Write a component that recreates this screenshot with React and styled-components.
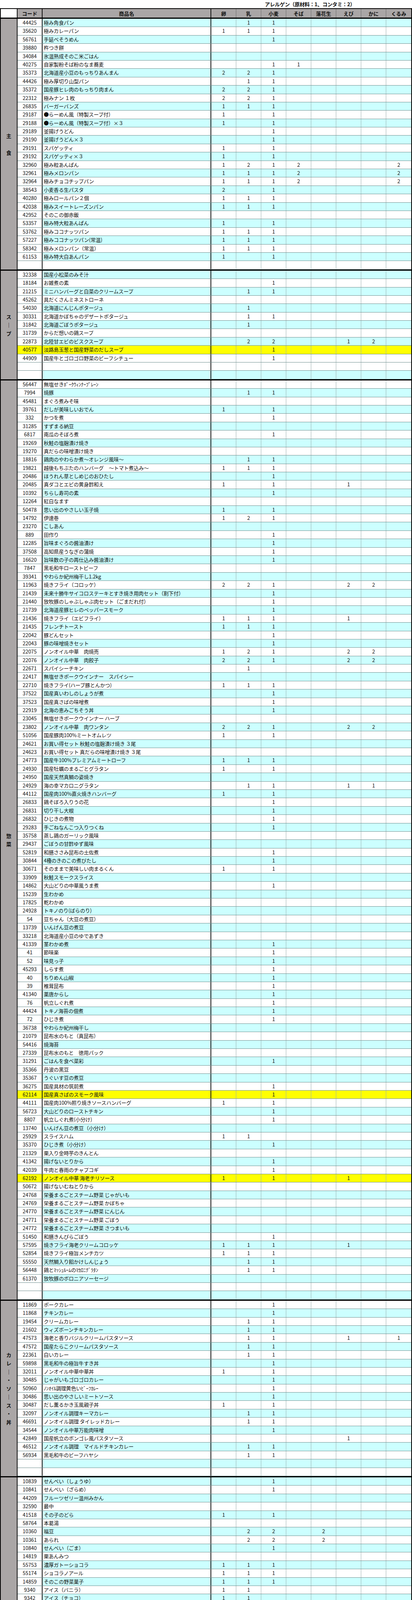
import React from "react";
import styled, { createGlobalStyle } from "styled-components";

const Global = createGlobalStyle`
  html, body { margin: 0; padding: 0; background: #fff; }
  body { font-family: "Noto Sans CJK JP", "Noto Sans", sans-serif; color: #111; }
`;

const COLS = "64px 432px repeat(8, 1fr)";

const Page = styled.div`
  width: 1055px;
`;
const Title = styled.div`
  height: 21px;
  display: flex;
  align-items: center;
  justify-content: flex-end;
  padding-right: 146px;
  font-size: 13px;
  font-weight: 700;
  letter-spacing: -0.3px;
`;
const Table = styled.div`
  width: 1051px;
  border: 2px solid #000;
`;
const HeaderRow = styled.div`
  display: grid;
  grid-template-columns: 43px ${COLS};
  height: 22px;
  background: #aaa6a6;
  border-bottom: 3px solid #000;
  font-size: 13px;
  font-weight: 700;
`;
const HCell = styled.div`
  display: flex;
  align-items: center;
  justify-content: center;
  background: ${(p) => (p.$blank ? "#fff" : "transparent")};
  border-right: ${(p) => (p.$thick ? "2px solid #111" : p.$last ? "none" : "1px solid #6d6d6d")};
`;
const Section = styled.div`
  display: grid;
  grid-template-columns: 43px 1fr;
  border-top: ${(p) => (p.$first ? "none" : "3px solid #000")};
`;
const Label = styled.div`
  background: #aaa6a6;
  border-right: 2px solid #111;
  display: flex;
  flex-direction: column;
  align-items: center;
  justify-content: center;
  font-size: 13px;
  font-weight: 700;
  overflow: hidden;
`;
const LabelChar = styled.div`
  height: 21.5px;
  line-height: 21.5px;
`;
const Rows = styled.div`
  display: flex;
  flex-direction: column;
`;
const Row = styled.div`
  display: grid;
  grid-template-columns: ${COLS};
  height: 21.4px;
  box-sizing: border-box;
  border-bottom: 1px solid #6f8f8f;
  background: ${(p) => (p.$bg === "y" ? "#ffff00" : p.$bg === "c" ? "#ccffff" : "#ffffff")};
  font-size: 13px;
  line-height: 20px;
`;
const Code = styled.div`
  text-align: center;
  border-right: 2px solid #111;
  background: ${(p) => (p.$yellow ? "transparent" : "#fff")};
`;
const Name = styled.div`
  padding-left: 3px;
  border-right: 2px solid #111;
  white-space: nowrap;
  overflow: hidden;
  letter-spacing: -0.2px;
`;
const Val = styled.div`
  text-align: center;
  border-right: ${(p) => (p.$last ? "none" : "1px solid #9cb0b0")};
`;

const HEAD = ["卵", "乳", "小麦", "そば", "落花生", "えび", "かに", "くるみ"];

const DATA = [
  ["主　食", `
44425|極み角食パン|.11
35620|極みカレーパン|111
56761|手延べそうめん|..1
39880|杵つき餅|
34084|氷温熟成そのこ米ごはん|
40275|自家製粉そば粉のなま蕎麦|..11
35373|北海道産小豆のもっちりあんまん|221
44426|極み厚切り山型パン|.11
35372|国産豚ヒレ肉のもっちり肉まん|221
22312|極みナン １枚|221
26835|バーガーバンズ|111
29187|●らーめん風（特製スープ付）|1.1
29188|●らーめん風（特製スープ付）×３|1.1
29189|釜揚げうどん|..1
29190|釜揚げうどん×３|..1
29191|スパゲッティ|1.1
29192|スパゲッティ×３|1.1
32960|極み粒あんぱん|1212...2
32961|極みメロンパン|1112...2
32964|極みチョコチップパン|1112...2
38543|小麦香る生パスタ|2.1
40280|極みロールパン２個|111
42038|極みスイートレーズンパン|111
42952|そのこの御赤飯|
53357|極み特大粒あんぱん|1.1
53762|極みココナッツパン|111
57227|極みココナッツパン(常温)|111
58342|極みメロンパン（常温）|111
61153|極み特大白あんパン|1.1
||`],
  ["ス｜プ", `
32338|国産小松菜のみそ汁|
18184|お雑煮の素|..1
21215|ミニハンバーグと白菜のクリームスープ|.11
45262|具だくさんミネストローネ|
54030|北海道にんじんポタージュ|.1
30331|北海道かぼちゃのデザートポタージュ|.11
31842|北海道ごぼうポタージュ|.1
31739|からだ想いの鶏スープ|
22873|北陸甘エビのビスクスープ|.22..12
40577|淡路島玉葱と国産野菜のだしスープ|..1|y
44909|国産牛とゴロゴロ野菜のビーフシチュー|..1|!
|||!
||`],
  ["惣菜", `
56447|無塩せきﾎﾟｰｸｳｨﾝﾅｰﾌﾟﾚｰﾝ|
7994|焼豚|.11
45481|まぐろ煮みそ味|
39761|だしが美味しいおでん|1.1
332|かつを煮|..1
31285|すずまる納豆|
6817|南瓜のそぼろ煮|..1
19269|秋鮭の塩麹漬け焼き|
19270|真だらの味噌漬け焼き|
18816|鶏肉のやわらか煮～オレンジ風味～|.11
19821|越後もちぶたのハンバーグ　～トマト煮込み～|111
20486|ほうれん草としめじのおひたし|..1
20485|真ダコとエビの黄身酢和え|1.1..1
10392|ちらし寿司の素|..1
12264|紅白なます|
50478|思い出のやさしい玉子焼|1.1
14792|伊達巻|121
23270|こしあん|
889|田作り|..1
12285|旨味まぐろの醤油漬け|..1
37508|高知県産うなぎの蒲焼|..1
16620|旨味数の子の再仕込み醤油漬け|..1
7847|黒毛和牛ローストビーフ|
39341|やわらか紀州梅干し1.2kg|
11963|焼きフライ（コロッケ）|221..22
21439|未来十勝牛サイコロステーキとすき焼き用肉セット（割下付）|..1
21440|放牧豚のしゃぶしゃぶ肉セット（ごまだれ付）|..1
21739|北海道産豚ヒレのペッパースモーク|..1
21436|焼きフライ（エビフライ）|111..1
21435|フレンチトースト|111
22042|豚どんセット|..1
22043|豚の味噌焼きセット|..1
22075|ノンオイル中華　肉焼売|121..22
22076|ノンオイル中華　肉餃子|221..22
22671|スパイシーチキン|.1
22417|無塩せきポークウインナー　スパイシー|
22710|焼きフライ(ハーブ豚とんかつ)|111
37522|国産真いわしのしょうが煮|..1
37523|国産真さばの味噌煮|..1
22919|北海の恵みごちそう丼|..1
23045|無塩せきポークウインナー ハーブ|
23802|ノンオイル中華　肉ワンタン|221..22
51056|国産豚肉100%ミートオムレツ|1.1
24621|お買い得セット 秋鮭の塩麹漬け焼き ３尾|
24623|お買い得セット 真だらの味噌漬け焼き ３尾|
24773|国産牛100%プレミアムミートローフ|111
24930|国産牡蠣のまるごとグラタン|1.1
24950|国産天然真鯛の姿焼き|
24929|海の幸マカロニグラタン|.11..11
44112|国産肉100%直火焼きハンバーグ|1.1
26833|鶏そぼろ入りうの花|..1
26831|切り干し大根|..1
26832|ひじきの煮物|..1
29283|手ごねなんこつ入りつくね|..1
35758|蒸し鶏のガーリック風味|
29437|ごぼうの甘酢ゆず風味|
52819|和膳ささみ昆布の土佐煮|..1
30844|4種のきのこの煮びたし|..1
30671|そのままで美味しい肉まるくん|1.1
33909|秋鮭スモークスライス|
14862|大山どりの中華風うま煮|..1
15239|生わかめ|
17825|乾わかめ|
24928|トキノのり(ばらのり)|
54|豆ちゃん（大豆の煮豆）|
13739|いんげん豆の煮豆|
33218|北海道産小豆のゆであずき|
41339|茎わかめ煮|..1
41|節味楽|..1
52|味見っ子|..1
45293|しらす煮|..1
40|ちりめん山椒|..1
39|椎茸昆布|..1
41340|薬唐からし|..1
76|帆立しぐれ煮|..1
44424|トキノ海苔の佃煮|..1
72|ひじき煮|..1
36738|やわらか紀州梅干し|
21079|昆布水のもと（真昆布）|
54416|焼海苔|
27339|昆布水のもと　徳用パック|
31291|ごはんを食べ菜彩|..1
35366|丹波の黒豆|
35367|うぐいす豆の煮豆|
36275|国産具材の筑前煮|..1
62114|国産真さばのスモーク風味|..1|y
44111|国産肉100%照り焼きソースハンバーグ|1.1
56723|大山どりのローストチキン|..1
8807|帆立しぐれ煮(小分け)|..1
13740|いんげん豆の煮豆（小分け）|
25929|スライスハム|11
35370|ひじき煮（小分け）|..1
21329|栗入り金時芋のきんとん|
41342|揚げないとりから|..1
42039|牛肉と春雨のチャプコギ|..1
62192|ノンオイル中華 海老チリソース|1.1..1|y
50672|揚げないむねとりから|
24768|栄養まるごとスチーム野菜 じゃがいも|
24769|栄養まるごとスチーム野菜 かぼちゃ|
24770|栄養まるごとスチーム野菜 にんじん|
24771|栄養まるごとスチーム野菜 ごぼう|
24772|栄養まるごとスチーム野菜 さつまいも|
51450|和膳きんぴらごぼう|..1
57595|焼きフライ海老クリームコロッケ|111..1
52854|焼きフライ極旨メンチカツ|111
55550|天然鯛入り餡かけしんじょう|.11
56448|鶏とﾏｯｼｭﾙｰﾑのﾏｶﾛﾆｸﾞﾗﾀﾝ|.11
61370|放牧豚のボロニアソーセージ|
||
||`],
  ["カレ｜・ソ｜ス・丼", `
11869|ポークカレー|..1
11868|チキンカレー|..1
19454|クリームカレー|.11
21602|ウィズボーンチキンカレー|.11
47573|海老と香りバジルクリームパスタソース|.11..1.1
47572|国産たらこクリームパスタソース|.11
22361|白いカレー|.11
59898|黒毛和牛の極旨牛すき丼|..1
32011|ノンオイル中華中華丼|1.1
30485|じゃがいもゴロゴロカレー|..1
50960|ﾉﾝｵｲﾙ調理黄色いﾋﾞｰﾌｶﾚｰ|..1
30486|思い出のやさしいミートソース|..1
30487|だし薫るかき玉風親子丼|1.1
32097|ノンオイル調理キーマカレー|.11
46691|ノンオイル調理 タイレッドカレー|.11
34544|ノンオイル中華万能肉味噌|..1
42849|国産帆立のボンゴレ風パスタソース|.....1
46512|ノンオイル調理　マイルドチキンカレー|.11
56934|黒毛和牛のビーフハヤシ|.11
||
||`],
  ["間食", `
10839|せんべい（しょうゆ）|..1
10841|せんべい（ざらめ）|..1
44209|フルーツゼリー温州みかん|
32590|最中|
41518|その子のどら|1.1
58764|本葛湯|
10360|福豆|.22.2
10361|あられ|.22.2
10840|せんべい（ごま）|..1
14819|栗あんみつ|
55753|濃厚ガトーショコラ|111
55174|ショコラノアール|111
14859|そのこの野菜菓子|111
9340|アイス（バニラ）|11
9342|アイス（チョコ）|11
16629|アイス（白いコーヒー）|11
21575|本格カステラ（プレーン）|1.1
21785|本格カステラ（チョコ）|1.1
21679|米粉ロール（プレーン）３個セット|11222222
21680|米粉ロール（チョコ）３個セット|11222222
21681|米粉ロール（キャラメル）３個セット|11222222
21682|米粉ロール（抹茶）３個セット|11222222
23902|カシューナッツクッキー|122.2
37541|黒豆塩大福|
24795|みたらし団子|..1
42225|プチゼリー葡萄|
32453|栗まん|121
36274|ドリームプリンカスタード|11
25505|ミックスポン菓子|
27486|ひとつぶチョコアソート|.1
27909|宇治抹茶ぼうろ|122.2
28457|●黒蜜風味ようかん|
44972|ちゅらしお飴|
44971|カカオ飴|
23043|完熟マンゴーゼリー　果肉入り|22
40225|アーモンドと蜂蜜のリエージュ風ワッフル|111
40226|アーモンドと蜂蜜のリエージュ風ワッフル×２|111
39845|桜葉薫る道明寺|
9445|アイス（グリーンティー）|11
58597|ザ・ミルクチョコレート|212.2
||`],
  ["調味料", `
37088|その子トマト|
37087|有機すだちポン酢|..1
45983|天日干しの海の塩|
41780|万能だしの素|.1
35023|再仕込み醤油|..1
32440|和風ノンオイルドレッシング|..1
31846|便利つゆ|..1
37086|スパイス香る熟成ウスターソース|
38542|純米酢|
33215|追い麹仕立ての生味噌|
45221|七色唐辛子|
32335|あらびき黒こしょう|
31847|国産小麦粉|221
38348|キムチちゃん|..1
12771|トーストクリーム|11
32336|万能ハーブガーリックソルト|
32588|季節のめぐみ国産いちごジャム|
35618|北海道みるくジャム|.1
35619|北海道みるくジャム チョコ|.1
32965|自然のめぐみ国産はちみつ|
||
||`],
  ["飲み物・酒類", `
31850|その子ブレンド浅煎り珈琲|
22214|プレミアムコーヒー　エメラルドマウンテン|
11332|ほうじ茶|
11331|緑茶|
52396|有機ジンジャー りんごとすだち|
855|その子酒|
42578|本格麦焼酎力松|
20356|国産茶葉ウーロン茶|
20354|国産茶葉プーアル茶|
20581|モーニングスイッチスムージー　ナイト（ブルーベリー&生姜）|
20582|モーニングスイッチスムージー　ベビー（オレンジ&ザクロ）|
20584|モーニングスイッチスムージー　キング（いちご&トマト）|
20586|素ドリンク　透|
10789|新茶（緑茶）|
48534|米麹と酒粕のあま酒|
32454|ホワイティ|.1
23934|素ドリンク 月|
59586|SO LIFTIE||!
24019|素ドリンク月　（スティックタイプ）|
31849|美ざくろジュース|
26269|レモンサイダー|
31845|その子美ワイン白|
26320|有機フルーツ＋野菜100|
28367|スペシャルブレンドドリップバッグコーヒー（浅煎り）|
28703|銀座でその子ビール|
28924|スペシャルブレンド深煎り ドリップバッグコーヒー|
29596|グレード1　モカ|
30328|グレード1　マンデリン|
35621|その子美ワイン赤|
12266|プレミアムコーヒー ブルーマウンテンNo.1|
24318|（1包）月 スティックタイプ|
42633|その子美ワインスパークリング白|
51159|その子珈琲アイスブレンドコーヒー|
52611|その子珈琲 深煎りブレンド|
||
||`],
  ["セレクト", `
20509|ひじき白あえの素|..1
20496|ノンオイル有機　玉葱ドレッシング|..1
20498|チキンコンソメ|..1
20499|有機胡麻ドレッシング|..1
20507|カシスジャム|
20516|ＸＹＺ（サイズダウン）|
21585|プチプチマスタード|..1
22444|無着色たらこ|
22441|極薄削り節パック|
22436|オーガニックスポーツドリンク|
22430|味の母|
22431|麹屋甚平・浅漬の素|
27447|にしん甘露煮|..1
35624|マヌカハニーMGO573UMF16250g|
39171|あんぽ柿||!
43310|ル・ブルーアッサムブレンド|
43794|瀬戸内キャビア|
48636|甘エビ昆布〆|.22..12
48637|白エビ昆布〆|.22..12
50899|ｵｰｶﾞﾆｯｸｱｯﾌﾟﾙ&ﾐﾝﾄｼﾞｭｰｽ|
50900|ｵｰｶﾞﾆｯｸｱｯﾌﾟﾙ&ﾊﾞｼﾞﾙｼﾞｭｰｽ|
50901|ｵｰｶﾞﾆｯｸｱｯﾌﾟﾙ&ｼﾅﾓﾝｼﾞｭｰｽ|
52071|オーガニックシュガーシロップ１２０ｇ|
53527|小田原かまぼこ（白）|.....22
58660|ボジョレー・ヌーボー・ジル・ド・ラモア|
62050|九州産らっきょう漬|
||`],
  ["サプリ", `
22064|ありがとう乳酸菌|
26123|●がんばれ善玉菌|
37213|ＳＯＮＯＫＯ　ＧＧロゼ|
26124|SONOKO GG|
26125|SONOKO GGﾄﾗｲｱﾙﾊﾟｯｸ(50粒)|
43782|SO ENERGIE|
24479|能活生活|
37897|TOKINO　G.G|.1
37520|荘水|
46866|YUTAKAMI|
||`],
];

let toggle = true;
let prev = null;
const SECTIONS = DATA.map(([label, text]) => {
  const rows = text.split("\n").filter((l) => l.length > 0).map((line) => {
    const [code, name, vals = "", flag = ""] = line.split("|");
    let base;
    if (flag === "!" && prev) base = prev;
    else base = toggle ? "c" : "w";
    prev = base;
    toggle = base !== "c";
    const bg = flag === "y" ? "y" : base;
    const v = vals.padEnd(8, ".").split("").map((ch) => (ch === "." ? "" : ch));
    return { code, name, v, bg };
  });
  return { label, rows };
});

export default function App() {
  return (
    <Page>
      <Global />
      <Title>アレルゲン（原材料：1、コンタミ：2）</Title>
      <Table>
        <HeaderRow>
          <HCell $blank $thick />
          <HCell $thick>コード</HCell>
          <HCell $thick>商品名</HCell>
          {HEAD.map((h, i) => (
            <HCell key={h} $last={i === HEAD.length - 1}>{h}</HCell>
          ))}
        </HeaderRow>
        {SECTIONS.map((s, si) => (
          <Section key={si} $first={si === 0}>
            <Label>
              {s.label.split("").map((ch, i) => (
                <LabelChar key={i}>{ch}</LabelChar>
              ))}
            </Label>
            <Rows>
              {s.rows.map((r, ri) => (
                <Row key={ri} $bg={r.bg}>
                  <Code $yellow={r.bg === "y"}>{r.code}</Code>
                  <Name>{r.name}</Name>
                  {r.v.map((x, i) => (
                    <Val key={i} $last={i === 7}>{x}</Val>
                  ))}
                </Row>
              ))}
            </Rows>
          </Section>
        ))}
      </Table>
    </Page>
  );
}
